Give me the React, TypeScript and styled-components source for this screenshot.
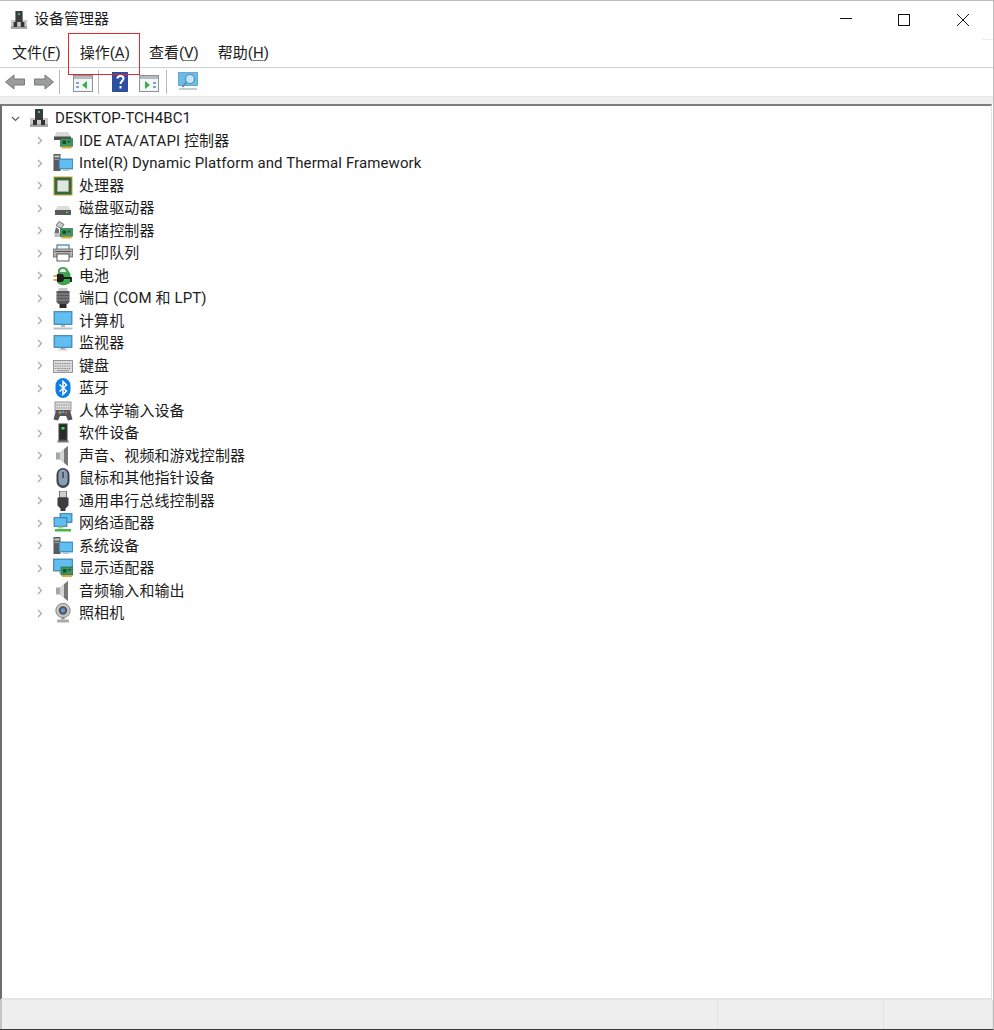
import React from "react";
import styled, { createGlobalStyle } from "styled-components";

const GlobalStyle = createGlobalStyle`
  html, body {
    margin: 0;
    padding: 0;
    background: #ffffff;
  }
`;

// WINDOW FRAME

const Window = styled.div`
  position: relative;
  display: flex;
  flex-direction: column;
  box-sizing: border-box;
  width: 994px;
  height: 1030px;
  overflow: hidden;
  background: #ffffff;
  border-top: 1px solid #bcbcbc;
  border-right: 1px solid #bdbdbd;
  border-bottom: 1px solid #3c3c3c;
  font-family: Roboto, "Noto Sans CJK SC", sans-serif;
  font-size: 15px;
  color: #1c1c1c;
`;

const TitleBar = styled.div`
  position: relative;
  display: flex;
  align-items: center;
  flex: 0 0 38px;
  padding: 0 1px 0 10px;

  &::after {
    content: "";
    position: absolute;
    right: 0;
    bottom: -1px;
    width: 11px;
    height: 1px;
    background: #ececec;
  }
`;

const TitleIcon = styled.svg`
  flex: none;
  width: 18px;
  height: 20px;
  margin: 0 6px 0 0;
`;

const TitleText = styled.span`
  flex: 1;
  line-height: 36px;
  padding-bottom: 2px;
`;

const WindowButton = styled.div<{ $gap?: number }>`
  display: flex;
  align-items: center;
  justify-content: center;
  width: 58px;
  height: 38px;
  margin-right: ${(p) => p.$gap ?? 0}px;
`;

const MenuBar = styled.div`
  display: flex;
  align-items: center;
  flex: 0 0 29px;
  box-sizing: border-box;
  gap: 19px;
  padding: 0 0 0 12px;
  border-bottom: 1px solid #cfd2d2;
`;

const MenuItem = styled.span`
  line-height: 24px;

  u {
    text-underline-offset: 2px;
    text-decoration-thickness: 1px;
    text-decoration-color: #777777;
  }
`;

const Callout = styled.div`
  position: absolute;
  left: 68px;
  top: 32px;
  width: 72px;
  height: 42px;
  box-sizing: border-box;
  border: 1px solid #e8272b;
`;

const Toolbar = styled.div`
  display: flex;
  align-items: center;
  flex: 0 0 28px;
  padding-left: 5px;
`;

const ToolSeparator = styled.div<{ $before: number; $after: number }>`
  width: 1px;
  height: 24px;
  background: #b9b9b9;
  margin: 0 ${(p) => p.$after}px 0 ${(p) => p.$before}px;
`;

const ToolIcon = styled.svg<{ $gap?: number; $drop?: number }>`
  flex: none;
  width: 20px;
  height: 20px;
  margin-right: ${(p) => p.$gap ?? 0}px;
  margin-top: ${(p) => p.$drop ?? 0}px;
`;

const GreyStrip = styled.div`
  flex: 0 0 8px;
  background: #f0f0f0;
  border-top: 1px solid #e6e6e6;
  box-sizing: border-box;
`;

// TREE

const Tree = styled.div`
  flex: 1;
  margin-right: 1px;
  padding-top: 0.8px;
  background: #ffffff;
  border-top: 2px solid #7d7d7d;
  border-left: 2px solid #6e6e6e;
  border-right: 1px solid #e2e2e2;
  border-bottom: 2px solid #e4e4e4;
`;

const Row = styled.div<{ $depth: number }>`
  display: flex;
  align-items: center;
  height: 22.5px;
  padding-left: ${(p) => (p.$depth === 0 ? 9 : 33)}px;
  white-space: nowrap;
`;

const Chevron = styled.svg`
  flex: none;
  width: 9px;
  height: 9px;
  margin-right: 9px;
`;

const DeviceIcon = styled.svg`
  flex: none;
  width: 20px;
  height: 20px;
  margin-right: 6px;
`;

const Label = styled.span`
  line-height: 22px;
  letter-spacing: 0.1px;
`;

// STATUS BAR

const StatusBar = styled.div`
  display: flex;
  flex: 0 0 29px;
  background: #eeeeee;
  border-left: 2px solid #c6c6c6;
`;

const StatusCell = styled.div<{ $width?: number }>`
  flex: ${(p) => (p.$width ? `0 0 ${p.$width}px` : "1")};
  border-right: 1px solid #e2e2e2;
  box-sizing: border-box;
`;

// ICONS

const screen = (x: number, y: number, w: number, h: number) => (
  <>
    <rect x={x} y={y} width={w} height={h} fill="#4a9fd8" stroke="#3d7ea8" strokeWidth="0.8" />
    <rect x={x + 1} y={y + 1} width={w - 2} height={h - 2} fill="#62bdf0" />
  </>
);

const tower = (
  <>
    <rect x="0.5" y="1" width="7" height="17" fill="#5b5b5b" />
    <rect x="1.5" y="2.5" width="5" height="2" fill="#c9c9c9" />
    <rect x="1.5" y="6" width="5" height="1" fill="#a5a5a5" />
  </>
);

const board = (x: number, y: number) => (
  <>
    <rect x={x} y={y} width="12" height="8" fill="#3f9560" stroke="#1e5c3a" strokeWidth="0.6" />
    <rect x={x + 2} y={y + 2} width="3.500" height="3.500" fill="#174c2e" />
    <rect x={x + 7} y={y + 2} width="3" height="2" fill="#1f6a3e" />
    <rect x={x + 1} y={y + 8} width="10" height="2" fill="#e2a93b" />
  </>
);

const speaker = (
  <>
    <path d="M3 6.500h4L15 0v20l-8-6.500H3z" fill="#a4a8a7" />
    <path d="M7 6.500l4-3.300v13.600l-4-3.300z" fill="#d3d6d5" />
    <path d="M11 3.200 15 0v20l-4-3.200z" fill="#767a79" />
  </>
);

const computerGlyph = (
  <>
    <rect x="1" y="10" width="18" height="9" fill="#c9c9c9" />
    <rect x="1" y="16" width="18" height="3" fill="#a6a6a6" />
    <rect x="4" y="12" width="4" height="5" fill="#333333" />
    <rect x="12" y="12" width="4" height="5" fill="#333333" />
    <rect x="6" y="1" width="8" height="11" fill="#3b3b3b" />
    <rect x="9" y="3" width="2" height="2" fill="#37c871" />
  </>
);

const icons: Record<string, React.ReactNode> = {
  ide: (
    <>
      <path d="M2 3.500 4 1h11l2 2.500V9H2z" fill="#d9d9d9" />
      <rect x="1" y="5.500" width="17" height="3.500" fill="#4f4f4f" />
      {board(7.500, 7.500)}
    </>
  ),
  system: (
    <>
      {tower}
      {screen(6, 6, 14, 10)}
      <rect x="10" y="16" width="6" height="2" fill="#b8c6cf" />
    </>
  ),
  cpu: (
    <>
      <rect x="0.500" y="0.500" width="19" height="19" fill="#c9a23a" />
      <rect x="1.500" y="1.500" width="17" height="17" fill="#2f6b3b" />
      <rect x="4" y="4" width="12" height="12" fill="#dfe5df" stroke="#4b5e4f" strokeWidth="0.8" />
    </>
  ),
  disk: (
    <>
      <path d="M3 10.500 5 8h10l2 2.500V12H3z" fill="#dcdcdc" />
      <rect x="2" y="12" width="16" height="5" fill="#5a5a5a" />
      <rect x="13" y="13.500" width="2" height="1.500" fill="#47d16e" />
    </>
  ),
  storage: (
    <>
      <path d="M6 0.500l5 3-3 4-5-3z" fill="#c9c9c9" stroke="#555555" strokeWidth="0.8" />
      <path d="M3 6 6 8.500v3.500H1.500z" fill="#6e6e6e" />
      <path d="M1.500 12h7v4h-7z" fill="#bdbdbd" />
      {board(7.500, 7.500)}
    </>
  ),
  printer: (
    <>
      <rect x="4" y="2" width="12" height="5" fill="#f2f6f8" stroke="#3f7fb5" strokeWidth="1.200" />
      <rect x="0.500" y="6" width="19" height="8" fill="#b3b3b3" stroke="#666666" strokeWidth="0.8" />
      <rect x="4" y="11" width="12" height="7" fill="#ffffff" stroke="#333333" strokeWidth="0.8" />
      <rect x="2" y="8" width="16" height="1" fill="#555555" />
    </>
  ),
  battery: (
    <>
      <path d="M5 4C6 0 14 0 15 4l2.500 4v8c-2 4-11 4-13 1z" fill="#3ba64a" />
      <path d="M7 4c1-2 5-2 6 0l1 2.500H6z" fill="#dff2de" stroke="#555555" strokeWidth="0.5" />
      <path d="M0.500 10h4M0.500 14h4" stroke="#c98a20" strokeWidth="1.500" />
      <path d="M4 8h4.500c3.500 0 3.500 8 0 8H4z" fill="#1d1d1d" />
      <path d="M11 12h7v4" fill="none" stroke="#1d1d1d" strokeWidth="1.800" />
    </>
  ),
  port: (
    <>
      <rect x="5.500" y="0" width="9" height="3" fill="#c4c4c4" />
      <path d="M3.500 3h13v11l-2 2h-9l-2-2z" fill="#585858" />
      <path d="M4 6h12M4 9h12M4 12h12" stroke="#959595" strokeWidth="1" />
      <rect x="6.500" y="16" width="7" height="4" fill="#2c2c2c" />
    </>
  ),
  computer: (
    <>
      {screen(1, 0.500, 18, 13)}
      <rect x="8" y="14" width="4" height="2" fill="#aeb9c1" />
      <rect x="0.500" y="16.500" width="19" height="2" fill="#b6c2ca" />
    </>
  ),
  monitor: (
    <>
      {screen(1, 2.500, 18, 12)}
      <rect x="7.500" y="15" width="5" height="1.500" fill="#99a6ae" />
      <rect x="5" y="16.500" width="10" height="1" fill="#c7d0d6" />
    </>
  ),
  keyboard: (
    <>
      <rect x="0.500" y="4.500" width="19" height="12" fill="#dcdcdc" stroke="#808080" strokeWidth="0.8" />
      <path d="M2 7.500h16M2 10h16M2 12.500h16" stroke="#8c8c8c" strokeWidth="1.200" strokeDasharray="1.500 0.800" />
      <rect x="4" y="14" width="12" height="1.200" fill="#a0a0a0" />
    </>
  ),
  bluetooth: (
    <>
      <rect x="2.500" y="0" width="15" height="20" rx="7.500" fill="#0f7fe6" />
      <path d="M6.500 6.500 13.500 13 10 16.500v-13L13.500 7 6.500 13.500" fill="none" stroke="#ffffff" strokeWidth="1.500" />
    </>
  ),
  hid: (
    <>
      <rect x="2" y="1" width="16" height="9" fill="#dcdcdc" stroke="#808080" strokeWidth="0.8" />
      <path d="M3.500 4h13M3.500 7h13" stroke="#8c8c8c" strokeWidth="1.200" strokeDasharray="1.500 0.800" />
      <path d="M0.500 18.500 3 9h14l2.500 9.500-4.500 1-2-4.500H7l-2 4.500z" fill="#52575e" />
      <circle cx="7" cy="11.500" r="1.300" fill="#d9a23a" />
      <circle cx="10" cy="11" r="1.300" fill="#4a9fd8" />
      <circle cx="13" cy="11.500" r="1.300" fill="#d9574a" />
    </>
  ),
  software: (
    <>
      <rect x="5.500" y="0.500" width="9" height="17.500" fill="#3a3a3a" />
      <rect x="7" y="2" width="6" height="14" fill="#2a2a2a" />
      <rect x="8.500" y="4" width="3" height="2.500" fill="#3ee05e" />
      <rect x="4.500" y="17.500" width="11" height="2" fill="#777777" />
    </>
  ),
  sound: speaker,
  mouse: (
    <>
      <rect x="3.500" y="0" width="13" height="20" rx="6.500" fill="#3f4347" />
      <rect x="5.500" y="1.500" width="9" height="16" rx="4.500" fill="#87a0b8" />
      <rect x="9.300" y="4" width="1.500" height="6" fill="#3f4347" />
    </>
  ),
  usb: (
    <>
      <rect x="6.500" y="0" width="7" height="6.500" fill="#d0d0d0" stroke="#555555" strokeWidth="0.8" />
      <path d="M4.500 6.500h11v8l-3 3V20h-5v-2.500l-3-3z" fill="#3d3d3d" />
    </>
  ),
  network: (
    <>
      {screen(7, 0.500, 12, 9)}
      {screen(1, 4.500, 13, 9)}
      <rect x="5" y="13.500" width="5" height="2" fill="#9acb8a" />
      <rect x="2" y="16" width="16" height="2.500" fill="#4fb548" />
    </>
  ),
  display: (
    <>
      {screen(0.500, 1, 19, 12)}
      <rect x="6" y="13.500" width="4" height="2" fill="#a5b3bb" />
      {board(8, 9)}
    </>
  ),
  camera: (
    <>
      <circle cx="10" cy="7.500" r="7.200" fill="#c5c5c5" stroke="#6d6d6d" strokeWidth="0.8" />
      <circle cx="10" cy="7.500" r="4.200" fill="#4f5359" />
      <circle cx="10" cy="7.500" r="2.200" fill="#5d9bd8" />
      <path d="M8.500 14.500h3v2h-3z" fill="#8c8c8c" />
      <rect x="4" y="16.500" width="12" height="3" rx="1" fill="#a9a9a9" />
    </>
  ),
};

const devices: { label: string; icon: string }[] = [
  { label: "IDE ATA/ATAPI 控制器", icon: "ide" },
  { label: "Intel(R) Dynamic Platform and Thermal Framework", icon: "system" },
  { label: "处理器", icon: "cpu" },
  { label: "磁盘驱动器", icon: "disk" },
  { label: "存储控制器", icon: "storage" },
  { label: "打印队列", icon: "printer" },
  { label: "电池", icon: "battery" },
  { label: "端口 (COM 和 LPT)", icon: "port" },
  { label: "计算机", icon: "computer" },
  { label: "监视器", icon: "monitor" },
  { label: "键盘", icon: "keyboard" },
  { label: "蓝牙", icon: "bluetooth" },
  { label: "人体学输入设备", icon: "hid" },
  { label: "软件设备", icon: "software" },
  { label: "声音、视频和游戏控制器", icon: "sound" },
  { label: "鼠标和其他指针设备", icon: "mouse" },
  { label: "通用串行总线控制器", icon: "usb" },
  { label: "网络适配器", icon: "network" },
  { label: "系统设备", icon: "system" },
  { label: "显示适配器", icon: "display" },
  { label: "音频输入和输出", icon: "sound" },
  { label: "照相机", icon: "camera" },
];

const menus = [
  { label: "文件", key: "F" },
  { label: "操作", key: "A" },
  { label: "查看", key: "V" },
  { label: "帮助", key: "H" },
];

const consolePane = (arrow: React.ReactNode) => (
  <>
    <rect x="0.500" y="2.500" width="19" height="16" fill="#f4f6f7" stroke="#8b9499" strokeWidth="1" />
    <rect x="1" y="3" width="18" height="3" fill="#b4bcc1" />
    {arrow}
  </>
);

export default function App() {
  return (
    <>
      <GlobalStyle />
      <Window>
        <TitleBar>
          <TitleIcon viewBox="0 0 20 20" preserveAspectRatio="none">
            {computerGlyph}
          </TitleIcon>
          <TitleText>设备管理器</TitleText>
          <WindowButton>
            <svg width="12" height="12" viewBox="0 0 12 12">
              <path d="M0 4.500h12" stroke="#111111" strokeWidth="1" />
            </svg>
          </WindowButton>
          <WindowButton $gap={1}>
            <svg width="12" height="12" viewBox="0 0 12 12">
              <rect x="0.500" y="0.500" width="11" height="11" fill="none" stroke="#111111" strokeWidth="1" />
            </svg>
          </WindowButton>
          <WindowButton>
            <svg width="12" height="12" viewBox="0 0 12 12">
              <path d="M0 0l12 12M12 0 0 12" stroke="#111111" strokeWidth="1" />
            </svg>
          </WindowButton>
        </TitleBar>

        <MenuBar>
          {menus.map((m) => (
            <MenuItem key={m.key}>
              {m.label}(<u>{m.key}</u>)
            </MenuItem>
          ))}
        </MenuBar>
        <Callout />

        <Toolbar>
          <ToolIcon viewBox="0 0 20 20" $gap={9}>
            <path d="M0.500 10 9 3v4h10.500v6H9v4z" fill="#9a9d9b" stroke="#777a78" strokeWidth="1" />
          </ToolIcon>
          <ToolIcon viewBox="0 0 20 20">
            <path d="M19.500 10 11 3v4H0.500v6H11v4z" fill="#9a9d9b" stroke="#777a78" strokeWidth="1" />
          </ToolIcon>
          <ToolSeparator $before={5} $after={13} />
          <ToolIcon viewBox="0 0 20 20" $drop={2}>
            {consolePane(
              <>
                <path d="M14 8v8l-5-4z" fill="#35b04a" />
                <path d="M3 9h3v2H3zM3 13h3v2H3z" fill="#7ea6c8" />
              </>
            )}
          </ToolIcon>
          <ToolSeparator $before={5} $after={10} />
          <ToolIcon viewBox="0 0 20 20" $gap={10}>
            <rect x="3.500" y="0.500" width="15" height="19" fill="#2c4fa8" stroke="#1f367a" strokeWidth="0.8" />
            <path d="M8.500 6.500c0-3.500 6-3.500 6 0 0 2.500-3 2.500-3 5.500" fill="none" stroke="#ffffff" strokeWidth="2" />
            <rect x="10.500" y="14" width="2" height="2.500" fill="#ffffff" />
          </ToolIcon>
          <ToolIcon viewBox="0 0 20 20" $drop={2}>
            {consolePane(
              <>
                <path d="M6 8v8l5-4z" fill="#35b04a" />
                <path d="M14 9h3v2h-3zM14 13h3v2h-3z" fill="#7ea6c8" />
              </>
            )}
          </ToolIcon>
          <ToolSeparator $before={7} $after={11} />
          <ToolIcon viewBox="0 0 20 20">
            <rect x="0.500" y="0.500" width="19" height="13" fill="#69bdea" stroke="#5b9cc4" strokeWidth="0.8" />
            <circle cx="12" cy="7" r="4.500" fill="#c3e6f6" stroke="#4d8fb3" strokeWidth="1.200" />
            <path d="M8.500 10 4.500 15" stroke="#6f8a96" strokeWidth="2" />
            <rect x="1" y="16" width="18" height="2" fill="#c0d0d8" />
          </ToolIcon>
        </Toolbar>
        <GreyStrip />

        <Tree>
          <Row $depth={0}>
            <Chevron viewBox="0 0 9 9">
              <path d="M1 3l3.500 3.500L8 3" fill="none" stroke="#555555" strokeWidth="1.100" />
            </Chevron>
            <DeviceIcon viewBox="0 0 20 20">{computerGlyph}</DeviceIcon>
            <Label>DESKTOP-TCH4BC1</Label>
          </Row>
          {devices.map((d) => (
            <Row $depth={1} key={d.label}>
              <Chevron viewBox="0 0 9 9">
                <path d="M3 1l3.500 3.500L3 8" fill="none" stroke="#a6a6a6" strokeWidth="1.100" />
              </Chevron>
              <DeviceIcon viewBox="0 0 20 20">{icons[d.icon]}</DeviceIcon>
              <Label>{d.label}</Label>
            </Row>
          ))}
        </Tree>

        <StatusBar>
          <StatusCell $width={716} />
          <StatusCell $width={166} />
          <StatusCell />
        </StatusBar>
      </Window>
    </>
  );
}
